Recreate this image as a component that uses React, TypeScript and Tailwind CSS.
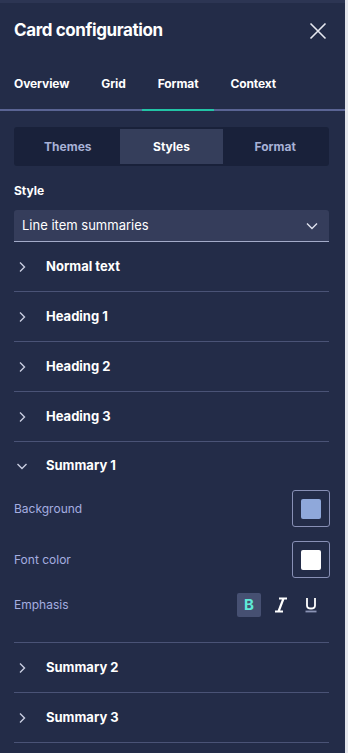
import React from "react";

const Chevron = ({ open }: { open?: boolean }) =>
  open ? (
    <svg width="14" height="14" viewBox="0 0 14 14" fill="none">
      <path d="M2.5 5L7 9.5L11.5 5" stroke="#c9cde0" strokeWidth="1.4" />
    </svg>
  ) : (
    <svg width="14" height="14" viewBox="0 0 14 14" fill="none">
      <path d="M5 2.5L9.5 7L5 11.5" stroke="#c9cde0" strokeWidth="1.4" />
    </svg>
  );

const Row = ({ label }: { label: string }) => (
  <div className="flex h-[50px] items-center border-b border-[#4a5376]">
    <div className="w-[32px] pl-[1px]">
      <Chevron />
    </div>
    <span className="text-[13px] font-bold text-white">{label}</span>
  </div>
);

const Swatch = ({ color }: { color: string }) => (
  <div className="flex h-[37px] w-[38px] items-center justify-center rounded-[3px] border border-[#8890b6]">
    <div className="h-[20px] w-[20px] rounded-[2px]" style={{ background: color }} />
  </div>
);

export default function App() {
  return (
    <div
      className="flex h-[753px] w-[348px] bg-[#232c48]"
      style={{ fontFamily: "Inter, 'Noto Sans', sans-serif" }}
    >
      <div className="flex w-[345px] flex-col">
        <div className="h-[3px] bg-[#2c3553]" />
        <div className="flex h-[56px] items-center justify-between pl-[14px] pr-[16px]">
          <span className="text-[17px] font-bold tracking-[-0.4px] text-white">Card configuration</span>
          <svg width="18" height="18" viewBox="0 0 18 18" fill="none" className="mr-[2px]">
            <path d="M1.5 1.5L16.5 16.5M16.5 1.5L1.5 16.5" stroke="#e6e8f0" strokeWidth="1.6" />
          </svg>
        </div>
        <div className="flex h-[52px] border-b-2 border-[#5a6494]">
          <div className="flex h-[50px] items-center pl-[14px] pr-[16px] text-[12px] font-bold tracking-[-0.1px] text-white">Overview</div>
          <div className="flex h-[50px] items-center px-[16px] text-[12px] font-bold tracking-[-0.1px] text-white">Grid</div>
          <div className="relative flex h-[50px] items-center px-[16px] text-[12px] font-bold tracking-[-0.1px] text-white">
            Format
            <div className="absolute bottom-[-2px] left-0 right-0 h-[2px] bg-[#22c4a6]" />
          </div>
          <div className="flex h-[50px] items-center px-[16px] text-[12px] font-bold tracking-[-0.1px] text-white">Context</div>
        </div>
        <div className="flex flex-col pl-[14px] pr-[16px] pt-[16px]">
          <div className="grid h-[39px] grid-cols-3 rounded-[3px] bg-[#19213a] p-[2px]">
            <div className="flex items-center justify-center text-[12px] font-bold text-[#a7b1d6]">Themes</div>
            <div className="flex items-center justify-center bg-[#353e5b] text-[12px] font-bold text-white">Styles</div>
            <div className="flex items-center justify-center text-[12px] font-bold text-[#a7b1d6]">Format</div>
          </div>
          <div className="mt-[17px] text-[12px] font-bold leading-[16px] text-white">Style</div>
          <div className="mt-[11px] flex h-[32px] items-center justify-between rounded-t-[3px] border-b border-[#a3abc9] bg-[#353d5b] pl-[8px] pr-[10px]">
            <span className="text-[13px] text-white">Line item summaries</span>
            <svg width="14" height="14" viewBox="0 0 14 14" fill="none">
              <path d="M2 4.5L7 9.5L12 4.5" stroke="#dfe2ee" strokeWidth="1.4" />
            </svg>
          </div>
          <Row label="Normal text" />
          <Row label="Heading 1" />
          <Row label="Heading 2" />
          <Row label="Heading 3" />
          <div className="flex flex-col border-b border-[#4a5376] pb-[25px]">
            <div className="flex h-[48px] items-center">
              <div className="w-[32px] pl-[1px]">
                <Chevron open />
              </div>
              <span className="text-[13px] font-bold text-white">Summary 1</span>
            </div>
            <div className="flex items-center justify-between">
              <span className="text-[12px] text-[#a5aee0]">Background</span>
              <div className="mr-[-1px]">
                <Swatch color="#8fa8da" />
              </div>
            </div>
            <div className="mt-[14px] flex items-center justify-between">
              <span className="text-[12px] text-[#a5aee0]">Font color</span>
              <div className="mr-[-1px]">
                <Swatch color="#ffffff" />
              </div>
            </div>
            <div className="mt-[15px] flex h-[24px] items-center justify-between">
              <span className="text-[12px] text-[#a5aee0]">Emphasis</span>
              <div className="flex items-center gap-[8px] pr-[8px]">
                <div className="flex h-[24px] w-[24px] items-center justify-center rounded-[2px] bg-[#465072] text-[15px] font-bold text-[#5eead8]">
                  B
                </div>
                <div className="flex h-[24px] w-[24px] items-center justify-center">
                  <svg width="14" height="16" viewBox="0 0 14 16" fill="none">
                    <path d="M5 1.5H13M1 14.5H9M9.5 1.5L4.5 14.5" stroke="#ffffff" strokeWidth="2.2" />
                  </svg>
                </div>
                <div className="flex h-[24px] w-[20px] items-center justify-center">
                  <svg width="14" height="16" viewBox="0 0 14 16" fill="none">
                    <path d="M3 1V8.5C3 10.5 4.5 11.5 7 11.5C9.5 11.5 11 10.5 11 8.5V1" stroke="#ffffff" strokeWidth="1.8" />
                    <path d="M1.5 14.5H12.5" stroke="#8a93b5" strokeWidth="1.8" />
                  </svg>
                </div>
              </div>
            </div>
          </div>
          <Row label="Summary 2" />
          <Row label="Summary 3" />
        </div>
      </div>
      <div className="w-[3px] bg-[#e4e6ec]" />
    </div>
  );
}
